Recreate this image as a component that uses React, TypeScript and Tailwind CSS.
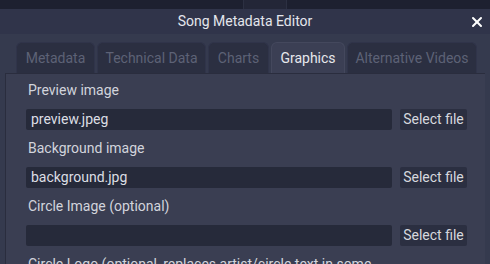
import { X } from "lucide-react";

const tabs = [
  { label: "Metadata", w: "w-[79px]" },
  { label: "Technical Data", w: "w-[109px]" },
  { label: "Charts", w: "w-[61px]" },
  { label: "Graphics", w: "w-[74px]", active: true },
  { label: "Alternative Videos", w: "w-[130px]" },
];

const rows = [
  { label: "Preview image", value: "preview.jpeg" },
  { label: "Background image", value: "background.jpg" },
  { label: "Circle Image (optional)", value: "" },
  { label: "Circle Logo (optional, replaces artist/circle text in some", value: "" },
];

export default function App() {
  return (
    <div
      className="w-[490px] h-[264px] overflow-hidden bg-[#1d2030] text-[14px]"
      style={{ fontFamily: "Roboto, 'Liberation Sans', sans-serif" }}>
      {/* fenêtre derrière */}
      <div className="h-[9px] flex">
        <div className="w-[243px]" />
        <div className="w-[44px] bg-[#232637] border-x border-[#2c3042]" />
      </div>

      {/* barre de titre */}
      <div className="relative h-[25px] bg-[#30344a] flex items-center justify-center text-[#e4e6ec]">
        <span>Song Metadata Editor</span>
        <X className="absolute right-[5px] top-[5px] w-[16px] h-[16px] text-white" strokeWidth={3} />
      </div>

      <div className="bg-[#353a4e] h-full">
        {/* onglets */}
        <div className="flex gap-[2px] pl-[16px] pt-[8px]">
          {tabs.map((t) => (
            <div
              key={t.label}
              className={`${t.w} h-[31px] rounded-t-[6px] flex items-center justify-center border border-b-0 ${
                t.active
                  ? "bg-[#3b3f54] border-[#44485d] text-[#e6e7ec]"
                  : "bg-[#2b2f41] border-[#30344a] text-[#5d6276]"
              }`}>
              {t.label}
            </div>
          ))}
        </div>

        {/* panneau */}
        <div className="ml-[5px] w-[480px] h-full bg-[#3a3e52] border-l border-t border-[#2a2d3e] pt-[6px] pl-[20px] pr-[18px]">
          {rows.map((r) => (
            <div key={r.label} className="mb-[8px]">
              <div className="h-[20px] leading-[20px] pl-[2px] text-[#d2d4dc] whitespace-nowrap">
                {r.label}
              </div>
              <div className="mt-[9px] flex gap-[8px] h-[21px]">
                <div className="w-[366px] rounded-[2px] bg-[#262a3a] px-[5px] leading-[21px] text-[#dcdee4]">
                  {r.value}
                </div>
                <button className="w-[67px] rounded-[2px] bg-[#2b2f41] leading-[21px] text-[#d6d8de]">
                  Select file
                </button>
              </div>
            </div>
          ))}
        </div>
      </div>
    </div>
  );
}
